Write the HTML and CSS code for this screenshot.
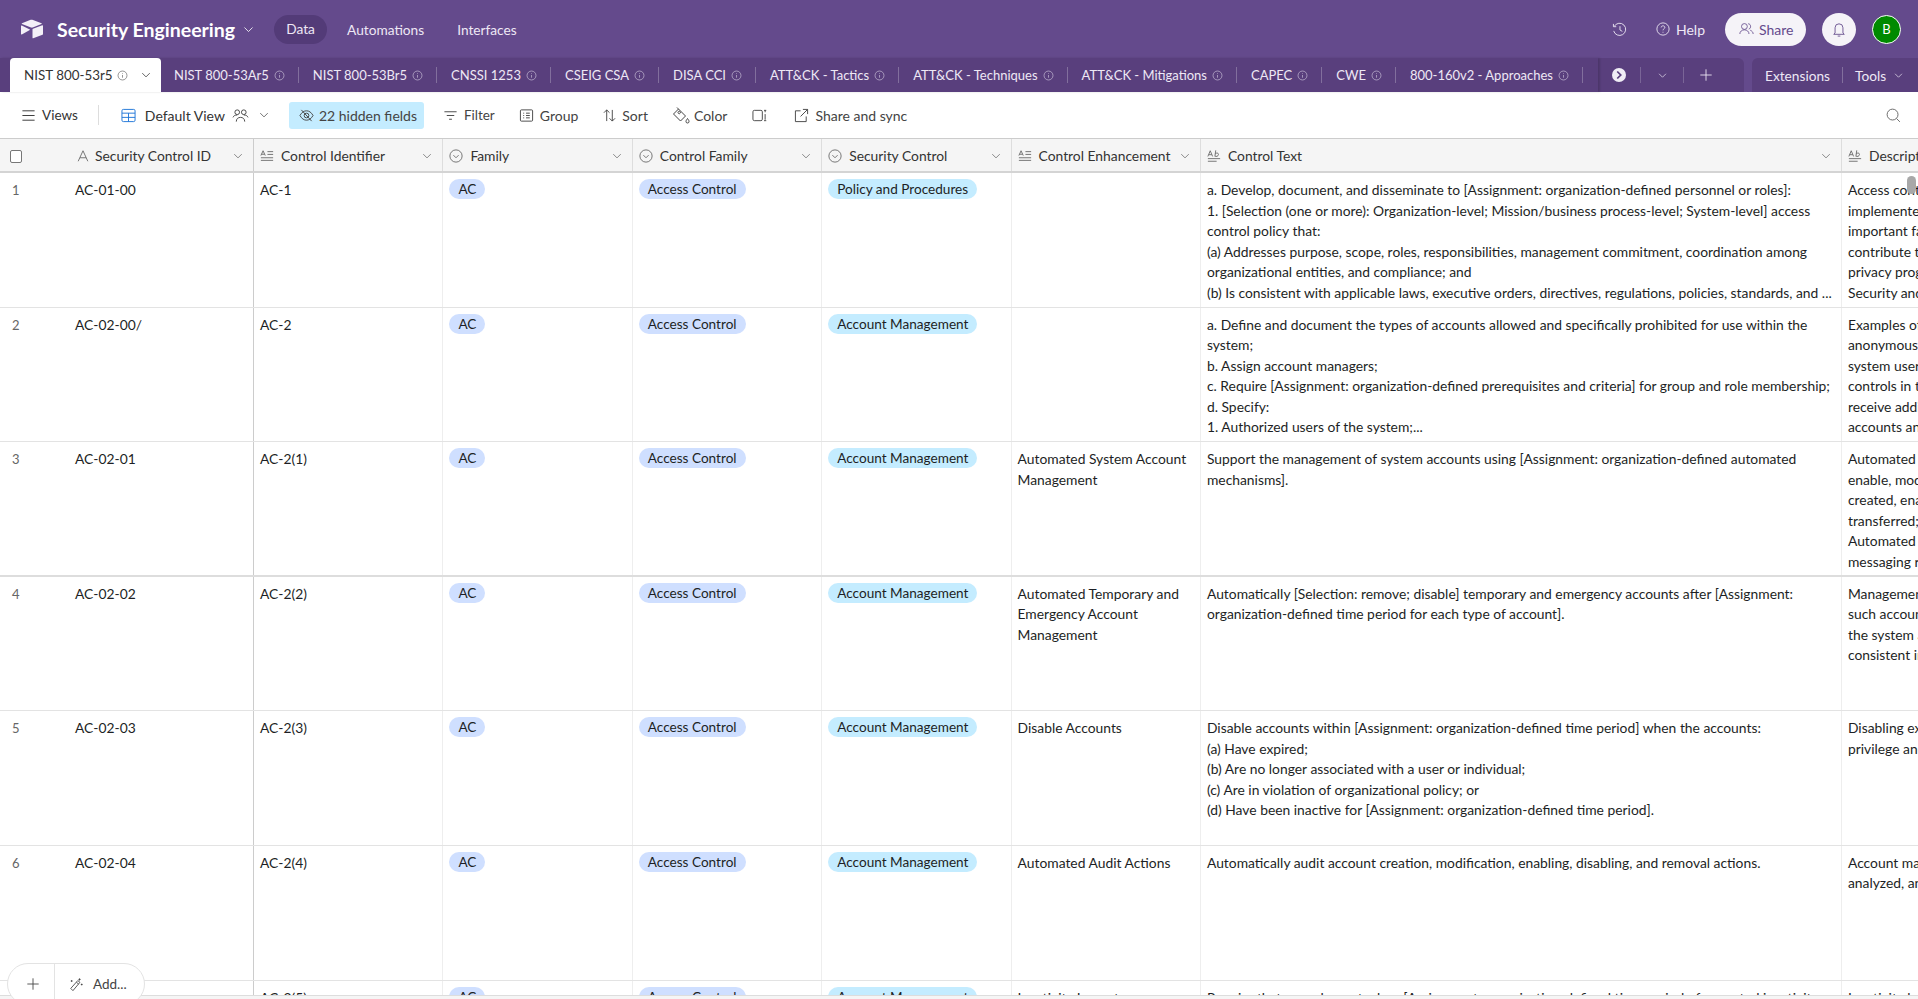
FILE: index.html
```html
<!DOCTYPE html>
<html lang="en">
<head>
    <meta charset="UTF-8">
    <title>Security Engineering</title>
    <link rel="stylesheet" href="styles.css">
</head>
<body>
<svg class="sprite" xmlns="http://www.w3.org/2000/svg">
    <symbol id="i-chev" viewBox="0 0 16 16"><path d="M3 5.500l5 5 5-5"/></symbol>
    <symbol id="i-info" viewBox="0 0 16 16"><circle cx="8" cy="8" r="6.500"/><path d="M8 7.200v4M8 4.600v1"/></symbol>
    <symbol id="i-single" viewBox="0 0 16 16"><path d="M2.500 14L8 2l5.500 12M4.500 10h7"/></symbol>
    <symbol id="i-long" viewBox="0 0 16 16"><path d="M1 7.500L3.500 2 6 7.500M1.800 6h3.400M8.500 3H15M8.500 6.200H15M1 10h14M1 13h14"/></symbol>
    <symbol id="i-select" viewBox="0 0 16 16"><circle cx="8" cy="8" r="7"/><path d="M5 7l3 3 3-3"/></symbol>
    <symbol id="i-rich" viewBox="0 0 16 16"><path d="M1 8.500L3.700 2l2.700 6.500M2 6.500h3.400M10 1.500L9 8.500M9.500 5.500c1-1.300 3.600-1.300 3.600.7 0 2.100-2.900 3-4 1.800M1 11h14M1 14h10"/></symbol>
    <symbol id="i-plus" viewBox="0 0 16 16"><path d="M8 1.500v13M1.500 8h13"/></symbol>
</svg>

<div class="app">
    <!-- top bar -->
    <header class="topbar">
        <svg class="logo" viewBox="0 0 24 20"><path d="M10 1L2 4.200c-.5.2-.5.6 0 .8l9 3.600c.6.200 1.200.200 1.700 0l8.800-3.600c.5-.2.5-.6 0-.8L13 1c-1-.4-2-.4-3 0z"/><path d="M12.500 10.500v8.300c0 .4.300.6.700.5l9.300-3.600c.3-.1.500-.4.500-.7V6.700c0-.4-.4-.6-.7-.5l-9.300 3.600c-.3.100-.5.400-.5.700z"/><path d="M1.800 6.500l8 3.900c.3.200.3.500 0 .7l-8 4.400c-.4.200-.8 0-.8-.4V6.900c0-.4.400-.6.800-.4z"/></svg>
        <span class="base-name">Security Engineering</span>
        <svg class="ico chev-top"><use href="#i-chev"/></svg>
        <nav class="top-nav">
            <a class="nav-item is-on">Data</a>
            <a class="nav-item nav-auto">Automations</a>
            <a class="nav-item">Interfaces</a>
        </nav>
        <div class="top-right">
            <svg class="ico history" viewBox="0 0 16 16"><path d="M2.500 4.500A6.500 6.500 0 1 1 1.800 9.500M1.500 2v3h3M8.500 4.500V8.500l2.500 1.500"/></svg>
            <a class="help"><svg class="ico help-ico" viewBox="0 0 16 16"><circle cx="8" cy="8" r="7"/><path d="M5.900 6.200C6 3.800 10 3.800 10.100 6.100 10.100 7.800 8 7.800 8 9.500M8 11.200v1"/></svg>Help</a>
            <a class="share-btn"><svg class="ico people" viewBox="0 0 18 16"><circle cx="6.500" cy="5" r="3.500"/><path d="M1 14c0-3 2.500-5 5.500-5s5.500 2 5.500 5M11 1.700c3.500 0 4 5.500.7 6.500M13.500 9.500c2 .7 3.500 2.500 3.500 4.500"/></svg>Share</a>
            <a class="bell-btn"><svg class="ico bell" viewBox="0 0 16 18"><path d="M3.500 13V7a4.500 4.500 0 0 1 9 0v6l1.500 1.500H2zM6.500 16.500h3"/></svg></a>
            <span class="avatar">B</span>
        </div>
    </header>

    <!-- table tabs -->
    <div class="tabbar">
        <div class="tabs">
            <div class="tab-active">NIST 800-53r5 <svg class="ico info"><use href="#i-info"/></svg><svg class="ico tab-chev"><use href="#i-chev"/></svg></div>
            <div class="tab">NIST 800-53Ar5 <svg class="ico info"><use href="#i-info"/></svg></div>
            <div class="tab">NIST 800-53Br5 <svg class="ico info"><use href="#i-info"/></svg></div>
            <div class="tab">CNSSI 1253 <svg class="ico info"><use href="#i-info"/></svg></div>
            <div class="tab">CSEIG CSA <svg class="ico info"><use href="#i-info"/></svg></div>
            <div class="tab">DISA CCI <svg class="ico info"><use href="#i-info"/></svg></div>
            <div class="tab">ATT&amp;CK - Tactics <svg class="ico info"><use href="#i-info"/></svg></div>
            <div class="tab">ATT&amp;CK - Techniques <svg class="ico info"><use href="#i-info"/></svg></div>
            <div class="tab">ATT&amp;CK - Mitigations <svg class="ico info"><use href="#i-info"/></svg></div>
            <div class="tab">CAPEC <svg class="ico info"><use href="#i-info"/></svg></div>
            <div class="tab">CWE <svg class="ico info"><use href="#i-info"/></svg></div>
            <div class="tab">800-160v2 - Approaches <svg class="ico info"><use href="#i-info"/></svg></div>
        </div>
        <div class="tab-tools">
            <span class="tool-cell"><span class="next-dot"><svg class="ico" viewBox="0 0 16 16"><path d="M6 4l4 4-4 4"/></svg></span></span>
            <span class="tool-cell"><svg class="ico tool-chev"><use href="#i-chev"/></svg></span>
            <span class="tool-cell no-line"><svg class="ico tool-plus"><use href="#i-plus"/></svg></span>
        </div>
        <div class="tab-extra">
            <span class="extra-item">Extensions</span>
            <span class="extra-item no-line">Tools <svg class="ico tool-chev"><use href="#i-chev"/></svg></span>
        </div>
    </div>

    <!-- view toolbar -->
    <div class="toolbar">
        <a class="tool tool-views"><svg class="ico t16" viewBox="0 0 16 16"><path d="M1.500 3h13M1.500 8h13M1.500 13h13"/></svg>Views</a>
        <span class="tool-sep"></span>
        <a class="tool tool-view"><svg class="ico grid-ico" viewBox="0 0 16 16"><rect x="1" y="1.500" width="14" height="13" rx="1.500"/><path d="M1 5.500h14M1 10h14M8 5.500v9"/></svg>Default View</a>
        <svg class="ico collab" viewBox="0 0 18 16"><circle cx="5.500" cy="4.500" r="2.500"/><circle cx="12.500" cy="4.500" r="2.500"/><path d="M1 10c1-2 2-2.500 4.500-2.500M17 10c-1-2-2-2.500-4.500-2.500M4.500 14.500c0-3 2-4.500 4.500-4.500s4.500 1.500 4.500 4.500"/></svg>
        <svg class="ico view-chev"><use href="#i-chev"/></svg>
        <a class="tool hidden-fields"><svg class="ico t16" viewBox="0 0 16 16"><path d="M1 8c2-3.500 4.300-5 7-5s5 1.500 7 5c-2 3.500-4.300 5-7 5s-5-1.500-7-5z"/><circle cx="8" cy="8" r="2.500"/><path d="M2.500 2l11 12"/></svg>22 hidden fields</a>
        <a class="tool tool-filter"><svg class="ico t16" viewBox="0 0 16 16"><path d="M1.500 4h13M4 8h8M6.500 12h3"/></svg>Filter</a>
        <a class="tool tool-group"><svg class="ico t16" viewBox="0 0 16 16"><rect x="1.500" y="2" width="13" height="12" rx="1"/><path d="M4.500 5.500h1M7.500 5.500h4M4.500 8h1M7.500 8h4M4.500 10.500h1M7.500 10.500h4"/></svg>Group</a>
        <a class="tool tool-sort"><svg class="ico t14" viewBox="0 0 14 16"><path d="M4 14V2M1 5l3-3 3 3M10 2v12M7 11l3 3 3-3"/></svg>Sort</a>
        <a class="tool tool-color"><svg class="ico t18" viewBox="0 0 18 18"><path d="M5 1.500l8.500 8.500-5 5-7-7 5-5M6 6.500a1.200 1.200 0 1 0 0-.01M15.500 12.500c1 1.500 1.500 2 1.500 3a1.500 1.500 0 0 1-3 0c0-1 .5-1.500 1.500-3z"/></svg>Color</a>
        <a class="tool tool-height"><svg class="ico t16" viewBox="0 0 16 16"><rect x="1" y="2.500" width="10" height="11" rx="1.500"/><path d="M14 2.500v2M14 6.500v6M12.800 2.500h2.400M12.800 13.500h2.400"/></svg></a>
        <a class="tool tool-sync"><svg class="ico t16" viewBox="0 0 16 16"><path d="M7 3H1.500v11.500H13V9M9.500 1.500h5v5M14.500 1.500L7 9"/></svg>Share and sync</a>
        <svg class="ico search" viewBox="0 0 16 16"><circle cx="7" cy="7" r="5.800"/><path d="M11.200 11.200l3.600 3.600"/></svg>
    </div>

    <!-- grid -->
    <div class="grid">
        <div class="row head">
            <div class="cell first"><span class="checkbox"></span><svg class="ico fld single"><use href="#i-single"/></svg><span class="h-name">Security Control ID</span><svg class="ico h-chev"><use href="#i-chev"/></svg></div>
            <div class="cell"><svg class="ico fld"><use href="#i-long"/></svg><span class="h-name">Control Identifier</span><svg class="ico h-chev"><use href="#i-chev"/></svg></div>
            <div class="cell"><svg class="ico fld"><use href="#i-select"/></svg><span class="h-name">Family</span><svg class="ico h-chev"><use href="#i-chev"/></svg></div>
            <div class="cell"><svg class="ico fld"><use href="#i-select"/></svg><span class="h-name">Control Family</span><svg class="ico h-chev"><use href="#i-chev"/></svg></div>
            <div class="cell"><svg class="ico fld"><use href="#i-select"/></svg><span class="h-name">Security Control</span><svg class="ico h-chev"><use href="#i-chev"/></svg></div>
            <div class="cell"><svg class="ico fld"><use href="#i-long"/></svg><span class="h-name">Control Enhancement</span><svg class="ico h-chev"><use href="#i-chev"/></svg></div>
            <div class="cell"><svg class="ico fld"><use href="#i-rich"/></svg><span class="h-name">Control Text</span><svg class="ico h-chev"><use href="#i-chev"/></svg></div>
            <div class="cell"><svg class="ico fld"><use href="#i-rich"/></svg><span class="h-name">Description</span></div>
        </div>

        <div class="row">
            <div class="cell first"><span class="num">1</span>AC-01-00</div>
            <div class="cell">AC-1</div>
            <div class="cell"><span class="pill">AC</span></div>
            <div class="cell"><span class="pill">Access Control</span></div>
            <div class="cell"><span class="pill cyan">Policy and Procedures</span></div>
            <div class="cell"></div>
            <div class="cell">a. Develop, document, and disseminate to [Assignment: organization-defined personnel or roles]:<br>1. [Selection (one or more): Organization-level; Mission/business process-level; System-level] access<br>control policy that:<br>(a) Addresses purpose, scope, roles, responsibilities, management commitment, coordination among<br>organizational entities, and compliance; and<br>(b) Is consistent with applicable laws, executive orders, directives, regulations, policies, standards, and ...</div>
            <div class="cell">Access control policy and procedures address the controls<br>implemented within systems and organizations. The risk<br>important factor in establishing such policies and procedures.<br>contribute to security and privacy assurance. Therefore, it is<br>privacy programs collaborate on the development of policies.<br>Security and privacy program policies and procedures</div>
        </div>

        <div class="row">
            <div class="cell first"><span class="num">2</span>AC-02-00/</div>
            <div class="cell">AC-2</div>
            <div class="cell"><span class="pill">AC</span></div>
            <div class="cell"><span class="pill">Access Control</span></div>
            <div class="cell"><span class="pill cyan">Account Management</span></div>
            <div class="cell"></div>
            <div class="cell">a. Define and document the types of accounts allowed and specifically prohibited for use within the<br>system;<br>b. Assign account managers;<br>c. Require [Assignment: organization-defined prerequisites and criteria] for group and role membership;<br>d. Specify:<br>1. Authorized users of the system;...</div>
            <div class="cell">Examples of system account types include individual, shared,<br>anonymous, temporary, emergency, developer, and service.<br>system users include organizational personnel or individuals.<br>controls in this family apply to all users. Users who<br>receive additional scrutiny by personnel responsible for<br>accounts and conditions for group and role membership.</div>
        </div>

        <div class="row thick">
            <div class="cell first"><span class="num">3</span>AC-02-01</div>
            <div class="cell">AC-2(1)</div>
            <div class="cell"><span class="pill">AC</span></div>
            <div class="cell"><span class="pill">Access Control</span></div>
            <div class="cell"><span class="pill cyan">Account Management</span></div>
            <div class="cell">Automated System Account<br>Management</div>
            <div class="cell">Support the management of system accounts using [Assignment: organization-defined automated<br>mechanisms].</div>
            <div class="cell">Automated system account management includes using<br>enable, modify, disable, and remove accounts; notify account<br>created, enabled, modified, disabled, or removed, or when<br>transferred; monitor system account usage; and report<br>Automated mechanisms can include internal system functions<br>messaging represented by telephone and text messaging.</div>
        </div>

        <div class="row">
            <div class="cell first"><span class="num">4</span>AC-02-02</div>
            <div class="cell">AC-2(2)</div>
            <div class="cell"><span class="pill">AC</span></div>
            <div class="cell"><span class="pill">Access Control</span></div>
            <div class="cell"><span class="pill cyan">Account Management</span></div>
            <div class="cell">Automated Temporary and<br>Emergency Account<br>Management</div>
            <div class="cell">Automatically [Selection: remove; disable] temporary and emergency accounts after [Assignment:<br>organization-defined time period for each type of account].</div>
            <div class="cell">Management of temporary and emergency accounts includes<br>such accounts after a predefined time period rather than at<br>the system administrator. Automatic removal or disabling of<br>consistent implementation of the organizational policy.</div>
        </div>

        <div class="row">
            <div class="cell first"><span class="num">5</span>AC-02-03</div>
            <div class="cell">AC-2(3)</div>
            <div class="cell"><span class="pill">AC</span></div>
            <div class="cell"><span class="pill">Access Control</span></div>
            <div class="cell"><span class="pill cyan">Account Management</span></div>
            <div class="cell">Disable Accounts</div>
            <div class="cell">Disable accounts within [Assignment: organization-defined time period] when the accounts:<br>(a) Have expired;<br>(b) Are no longer associated with a user or individual;<br>(c) Are in violation of organizational policy; or<br>(d) Have been inactive for [Assignment: organization-defined time period].</div>
            <div class="cell">Disabling expired, inactive, or otherwise anomalous accounts<br>privilege and least functionality which reduce the attack surface.</div>
        </div>

        <div class="row">
            <div class="cell first"><span class="num">6</span>AC-02-04</div>
            <div class="cell">AC-2(4)</div>
            <div class="cell"><span class="pill">AC</span></div>
            <div class="cell"><span class="pill">Access Control</span></div>
            <div class="cell"><span class="pill cyan">Account Management</span></div>
            <div class="cell">Automated Audit Actions</div>
            <div class="cell">Automatically audit account creation, modification, enabling, disabling, and removal actions.</div>
            <div class="cell">Account management audit records are defined in accordance<br>analyzed, and reported in accordance with organizational policy.</div>
        </div>

        <div class="row thick">
            <div class="cell first"><span class="num">7</span>AC-02-05</div>
            <div class="cell">AC-2(5)</div>
            <div class="cell"><span class="pill">AC</span></div>
            <div class="cell"><span class="pill">Access Control</span></div>
            <div class="cell"><span class="pill cyan">Account Management</span></div>
            <div class="cell">Inactivity Logout</div>
            <div class="cell">Require that users log out when [Assignment: organization-defined time period of expected inactivity or</div>
            <div class="cell">Inactivity logout is behavior or policy-based and requires users</div>
        </div>
    </div>
    <div class="grid-foot"></div>

    <!-- over the grid -->
    <div class="add-box">
        <a class="add-plus"><svg class="ico"><use href="#i-plus"/></svg></a>
        <a class="add-more"><svg class="ico" viewBox="0 0 16 16"><path d="M2 12.500l8-9 2.500 2-8 9.500zM8.500 5.500l2.500 2M12 1v2.500M10.800 2.200h2.500M14.500 7v2M13.500 8h2M3 3v2M2 4h2"/></svg>Add...</a>
    </div>
    <div class="scroll-thumb"></div>
</div>
</body>
</html>
```

FILE: styles.css
```css
* {
    box-sizing: border-box;
}

body {
    margin: 0;
    overflow: hidden;
    background: #fff;
    color: #1d1f25;
    font-family: Lato, "Open Sans", sans-serif;
    font-size: 14px;
}

a {
    cursor: pointer;
}

.sprite {
    display: none;
}

.ico {
    fill: none;
    stroke: currentColor;
    stroke-width: 1;
    flex: none;
}

.app {
    position: relative;
    display: flex;
    flex-direction: column;
    height: 999px;
    overflow: hidden;
}

/* top bar */
.topbar {
    display: flex;
    align-items: center;
    height: 58px;
    padding: 0 17px 0 20px;
    background: #644a8c;
    color: #fff;
}

.logo {
    width: 24px;
    height: 20px;
    margin-right: 13px;
    fill: #f3f0f7;
}

.base-name {
    font-size: 19.5px;
    font-weight: 700;
}

.chev-top {
    width: 13px;
    height: 13px;
    margin-left: 7px;
}

.top-nav {
    display: flex;
    align-items: center;
    gap: 20px;
    margin-left: 19px;
    font-size: 13.7px;
}

.nav-item {
    padding: 5px 0;
    color: #eee8f5;
}

.nav-item.is-on {
    width: 53px;
    height: 29px;
    border-radius: 15px;
    background: #533b78;
    text-align: center;
}

.nav-auto {
    margin-right: 13px;
}

.top-right {
    display: flex;
    align-items: center;
    margin-left: auto;
    font-size: 14px;
}

.history {
    width: 15px;
    height: 15px;
    margin-right: 29px;
    color: #e8e2f0;
}

.help {
    display: flex;
    align-items: center;
    gap: 6px;
    margin-right: 20px;
    color: #eee8f5;
}

.help-ico {
    width: 14px;
    height: 14px;
}

.share-btn {
    display: flex;
    align-items: center;
    gap: 5px;
    width: 81px;
    height: 33px;
    padding-left: 14px;
    border-radius: 17px;
    background: #f5f3f8;
    color: #644a8c;
}

.people {
    width: 15px;
    height: 14px;
}

.bell-btn {
    display: flex;
    align-items: center;
    justify-content: center;
    width: 34px;
    height: 33px;
    margin-left: 16px;
    border-radius: 50%;
    background: #f5f3f8;
    color: #644a8c;
}

.bell {
    width: 14px;
    height: 17px;
}

.avatar {
    width: 29px;
    height: 29px;
    margin-left: 16px;
    border: 1px solid #fff;
    border-radius: 50%;
    background: #008a00;
    color: #fff;
    font-size: 13px;
    line-height: 27px;
    text-align: center;
}

/* tabs */
.tabbar {
    display: flex;
    height: 34px;
    background: #644a8c;
    color: #eee8f5;
    font-size: 13px;
}

.tabs {
    display: flex;
    align-items: center;
    width: 1598px;
    padding-left: 10px;
    background: #593f7d;
    box-shadow: 2px 0 2px rgba(0, 0, 0, 0.15);
    z-index: 1;
    white-space: nowrap;
}

.tab-active {
    display: flex;
    flex: none;
    align-items: center;
    gap: 4px;
    width: 151px;
    height: 34px;
    margin-right: -1px;
    padding-left: 14px;
    border-radius: 4px 4px 0 0;
    background: #fff;
    color: #333;
    font-size: 13.4px;
}

.tab-chev {
    width: 12px;
    height: 12px;
    margin-left: 8px;
}

.tab {
    display: flex;
    flex: none;
    align-items: center;
    gap: 5px;
    height: 16px;
    padding: 0 13px 0 14px;
    border-right: 1px solid rgba(255, 255, 255, 0.25);
}

.info {
    width: 11px;
    height: 11px;
    opacity: 0.75;
}

.tab-tools {
    display: flex;
    align-items: center;
    width: 146px;
    height: 34px;
    border-top-right-radius: 6px;
    background: #593f7d;
}

.tool-cell {
    display: flex;
    align-items: center;
    justify-content: center;
    width: 43px;
    height: 16px;
    border-right: 1px solid rgba(255, 255, 255, 0.2);
}

.no-line {
    border-right: 0 !important;
}

.next-dot {
    display: flex;
    width: 14px;
    height: 14px;
    border-radius: 50%;
    background: #f0edf5;
    color: #593f7d;
}

.next-dot .ico {
    stroke-width: 2;
}

.tool-chev {
    width: 11px;
    height: 11px;
}

.tool-plus {
    width: 14px;
    height: 14px;
}

.tab-extra {
    display: flex;
    align-items: center;
    flex: 1;
    height: 34px;
    margin-left: 8px;
    border-top-left-radius: 6px;
    background: #593f7d;
    font-size: 13.7px;
}

.extra-item {
    display: flex;
    align-items: center;
    gap: 7px;
    height: 16px;
    padding: 0 12px 0 13px;
    border-right: 1px solid rgba(255, 255, 255, 0.25);
}

.extra-item.no-line {
    padding-left: 12px;
}

/* toolbar */
.toolbar {
    display: flex;
    align-items: center;
    height: 46px;
    padding: 0 17px 0 21px;
    color: #444;
    font-size: 14px;
}

.tool {
    display: flex;
    align-items: center;
    gap: 6px;
}

.t16 {
    width: 15px;
    height: 15px;
}

.t14 {
    width: 13px;
    height: 15px;
}

.t18 {
    width: 18px;
    height: 18px;
}

.tool-views {
    color: #333;
    font-size: 13.5px;
}

.tool-sep {
    width: 1px;
    height: 20px;
    margin: 0 22px 0 20px;
    background: #ddd;
}

.tool-view {
    gap: 9px;
    color: #333;
}

.grid-ico {
    width: 15px;
    height: 15px;
    color: #1f75d8;
}

.collab {
    width: 17px;
    height: 15px;
    margin-left: 7px;
}

.view-chev {
    width: 12px;
    height: 12px;
    margin-left: 9px;
}

.hidden-fields {
    gap: 5px;
    width: 135px;
    height: 27px;
    margin-left: 19px;
    padding-left: 10px;
    border-radius: 3px;
    background: #c4ecff;
}

.tool-filter {
    margin-left: 19px;
    font-size: 13.5px;
}

.tool-group {
    margin-left: 24px;
}

.tool-sort {
    margin-left: 25px;
}

.tool-color {
    gap: 4px;
    margin-left: 24px;
}

.tool-height {
    margin-left: 25px;
}

.tool-sync {
    margin-left: 27px;
}

.search {
    width: 15px;
    height: 15px;
    margin-left: auto;
    color: #666;
}

/* grid */
.grid {
    flex: 1;
    overflow: hidden;
    border-top: 1px solid #ccc;
}

.row {
    display: grid;
    grid-template-columns: 254px repeat(5, 189.4px) 641px 300px;
    width: 2100px;
    height: 134.6px;
    border-bottom: 1px solid #e3e3e3;
}

.row.thick {
    border-bottom-width: 2px;
    border-bottom-color: #ddd;
}

.row.head {
    height: 34px;
    border-bottom: 2px solid #d4d4d4;
    background: #f5f5f5;
    color: #333;
}

.cell {
    padding: 7px 7px 0 6px;
    border-right: 1px solid #eee;
    overflow: hidden;
    font-size: 13.85px;
    line-height: 20.5px;
    white-space: nowrap;
}

.cell.first {
    display: flex;
    align-items: flex-start;
    padding-left: 12px;
    border-right-color: #ccc;
}

.head .cell {
    display: flex;
    align-items: center;
    padding: 2px 7px 0 6px;
    border-right-color: #ddd;
}

.head .cell.first {
    padding-left: 10px;
    border-right-color: #ccc;
}

.num {
    width: 63px;
    color: #666;
    font-size: 13px;
}

.checkbox {
    width: 12px;
    height: 13px;
    margin-right: 54px;
    border: 1px solid #777;
    border-radius: 2px;
    background: #fff;
}

.fld {
    width: 14px;
    height: 14px;
    margin-right: 7px;
    color: #666;
}

.single {
    margin-right: 5px;
}

.h-name {
    flex: 1;
}

.h-chev {
    width: 12px;
    height: 12px;
    margin-right: 2px;
    color: #666;
}

.pill {
    display: inline-block;
    height: 20px;
    margin-top: -1px;
    padding: 0 9px;
    border-radius: 10px;
    background: #cfdfff;
    font-size: 13.6px;
    line-height: 20px;
    vertical-align: top;
}

.pill.cyan {
    background: #c4ecff;
}

.grid-foot {
    height: 4px;
    border-top: 1px solid #ddd;
    background: #f5f5f5;
}

/* floating add box and scroll thumb */
.add-box {
    position: absolute;
    left: 7px;
    top: 963px;
    display: flex;
    width: 138px;
    height: 42px;
    border: 1px solid #e3e3e3;
    border-radius: 21px;
    background: #fff;
    color: #444;
    font-size: 13.5px;
}

.add-plus {
    display: flex;
    align-items: center;
    justify-content: center;
    width: 47px;
    padding-left: 3px;
    border-right: 1px solid #e3e3e3;
}

.add-plus .ico {
    width: 14px;
    height: 14px;
}

.add-more {
    display: flex;
    align-items: center;
    gap: 10px;
    padding-left: 14px;
}

.add-more .ico {
    width: 14px;
    height: 15px;
}

.scroll-thumb {
    position: absolute;
    left: 1907px;
    top: 176px;
    width: 9px;
    height: 18px;
    border-radius: 5px;
    background: #a8a8a8;
}
```
